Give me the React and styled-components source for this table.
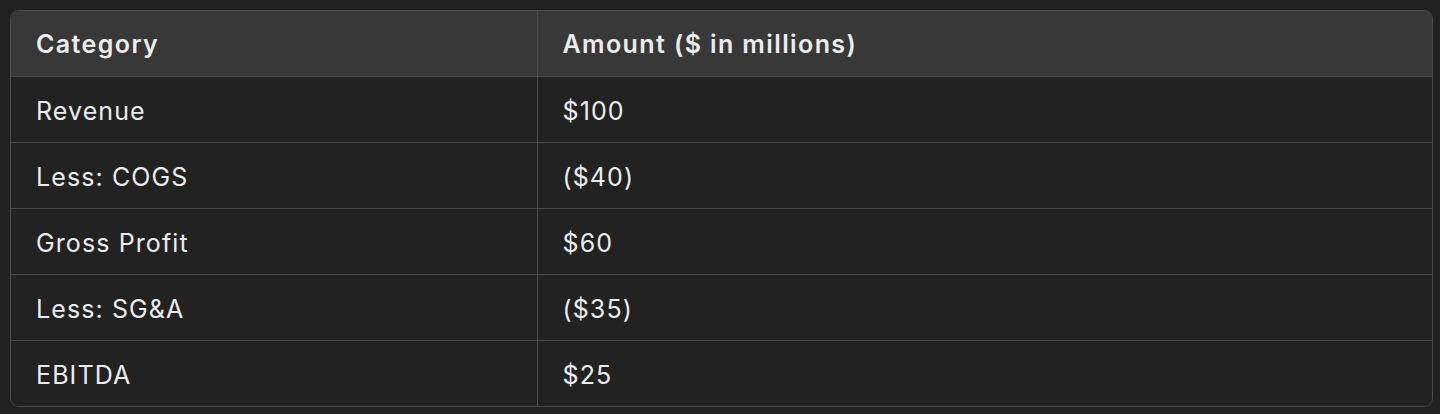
import React from 'react';
import styled, { createGlobalStyle } from 'styled-components';

const GlobalStyle = createGlobalStyle`
  html, body {
    margin: 0;
    background: #212121;
  }
  body {
    font-family: Inter, "Noto Sans", sans-serif;
    color: #ececec;
  }
`;

const Page = styled.div`
  padding: 10px 7px 7px 10px;
`;

const TableWrap = styled.div`
  border: 1px solid #4a4a4a;
  border-radius: 9px;
  overflow: hidden;
`;

const Table = styled.table`
  width: 100%;
  border-collapse: collapse;
  table-layout: fixed;
`;

const HeadRow = styled.tr`
  background: #383838;
`;

const Row = styled.tr`
  background: #222222;
  border-top: 1px solid #4a4a4a;
`;

const Cell = styled.td`
  height: ${(p) => (p.$head ? 65 : 66)}px;
  padding: ${(p) => (p.$head ? '2px 25px 0' : '3px 25px 0')};
  font-size: 25px;
  letter-spacing: ${(p) => (p.$head ? 1.4 : 1.1)}px;
  font-weight: ${(p) => (p.$head ? 600 : 400)};
  text-align: left;
  vertical-align: middle;
  box-sizing: border-box;
  & + & {
    border-left: 1px solid #4a4a4a;
  }
`;

const rows = [
  ['Revenue', '$100'],
  ['Less: COGS', '($40)'],
  ['Gross Profit', '$60'],
  ['Less: SG&A', '($35)'],
  ['EBITDA', '$25'],
];

export default function App() {
  return (
    <>
      <GlobalStyle />
      <Page>
        <TableWrap>
          <Table>
            <colgroup>
              <col style={{ width: 526 }} />
              <col />
            </colgroup>
            <thead>
              <HeadRow>
                <Cell as="th" $head>Category</Cell>
                <Cell as="th" $head>Amount ($ in millions)</Cell>
              </HeadRow>
            </thead>
            <tbody>
              {rows.map(([cat, amt]) => (
                <Row key={cat}>
                  <Cell>{cat}</Cell>
                  <Cell>{amt}</Cell>
                </Row>
              ))}
            </tbody>
          </Table>
        </TableWrap>
      </Page>
    </>
  );
}
